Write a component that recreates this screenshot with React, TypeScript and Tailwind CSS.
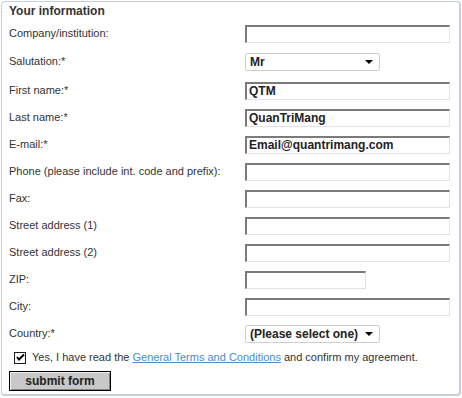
import React from "react"

const font = { fontFamily: '"Liberation Sans", Arial, sans-serif' }

function TextRow({ label, value, width = "w-[205px]", className = "" }: { label: string; value?: string; width?: string; className?: string }) {
  return (
    <div className={`flex items-center h-[27px] ${className}`}>
      <label className="w-[236px] shrink-0 text-[11px] text-[#333]">{label}</label>
      <div
        className={`${width} h-[18px] bg-white border-t-2 border-l-2 border-b border-r border-t-[#7b7b7b] border-l-[#7b7b7b] border-b-[#e2e2e2] border-r-[#e2e2e2] pl-[2px] text-[12px] font-bold text-[#222] leading-[15px]`}
      >
        {value}
      </div>
    </div>
  )
}

function SelectRow({ label, value, className = "" }: { label: string; value: string; className?: string }) {
  return (
    <div className={`flex items-center h-[27px] ${className}`}>
      <label className="w-[236px] shrink-0 text-[11px] text-[#333]">{label}</label>
      <div className="w-[135px] h-[18px] bg-white border border-[#cfcfcf] rounded-[2px] flex items-center justify-between pl-[4px] pr-[6px]">
        <span className="text-[12px] font-bold text-[#222]">{value}</span>
        <svg width="8" height="4" viewBox="0 0 8 4">
          <path d="M0 0h8L4 4z" fill="#000" />
        </svg>
      </div>
    </div>
  )
}

export default function App() {
  return (
    <div className="w-[462px] h-[398px] bg-white" style={font}>
      <div className="ml-[1px] mt-[1px] w-[460px] h-[395px] border border-r-2 border-b-2 border-[#c6ced8] rounded-[4px] pl-[7px]">
        <div className="h-[17px] text-[12px] font-bold text-[#333]">Your information</div>
        <TextRow label="Company/institution:" className="mt-[1px]" />
        <SelectRow label="Salutation:*" value="Mr" className="mt-[1px]" />
        <TextRow label="First name:*" value="QTM" className="mt-[2px]" />
        <TextRow label="Last name:*" value="QuanTriMang" />
        <TextRow label="E-mail:*" value="Email@quantrimang.com" />
        <TextRow label="Phone (please include int. code and prefix):" />
        <TextRow label="Fax:" />
        <TextRow label="Street address (1)" />
        <TextRow label="Street address (2)" />
        <TextRow label="ZIP:" width="w-[121px]" />
        <TextRow label="City:" />
        <SelectRow label="Country:*" value="(Please select one)" />
        <div className="flex items-center h-[21px] pl-[5px] text-[11px] text-[#333]">
          <span className="w-[12px] h-[12px] border border-[#1c1c1c] bg-white flex items-center justify-center mr-[6px]">
            <svg width="9" height="9" viewBox="0 0 9 9">
              <path d="M1 4l2 2.5L8 1.5" stroke="#000" strokeWidth="2" fill="none" />
            </svg>
          </span>
          <span>
            Yes, I have read the{" "}
            <a className="text-[#4a8ad4] underline">General Terms and Conditions</a> and confirm my agreement.
          </span>
        </div>
        <button className="w-[102px] h-[20px] border border-black bg-[#c8c8c8] shadow-[inset_1px_1px_0_#f0f0f0,inset_-1px_-1px_0_#808080] text-[12px] font-bold text-[#222] leading-none">
          submit form
        </button>
      </div>
    </div>
  )
}
